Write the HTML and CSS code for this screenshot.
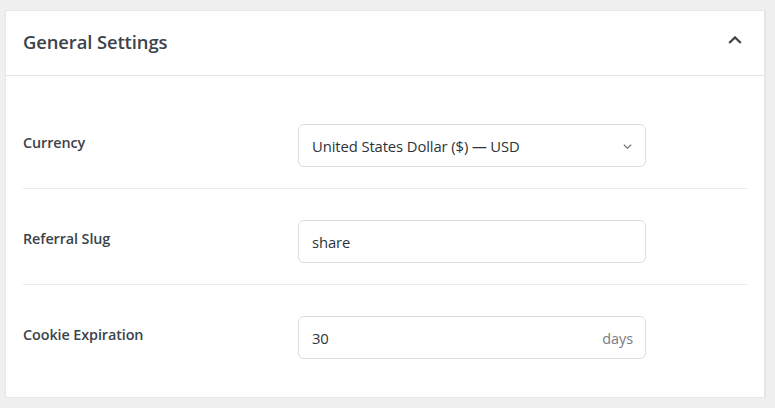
FILE: index.html
```html
<!DOCTYPE html>
<html lang="en">
<head>
<meta charset="utf-8">
<title>General Settings</title>
<link rel="stylesheet" href="styles.css">
</head>
<body>
<div class="page">
  <section class="card">
    <header class="card-header">
      <h2 class="card-title">General Settings</h2>
      <button class="toggle" type="button" aria-label="Collapse">
        <svg width="14" height="8" viewBox="0 0 14 8"><path d="M1.2 7 L7 1.4 L12.8 7" fill="none" stroke="#3c434a" stroke-width="2.2"/></svg>
      </button>
    </header>
    <div class="card-body">
      <div class="row">
        <div class="label">Currency</div>
        <div class="field">
          <div class="control select">
            <span class="value">United States Dollar ($) — USD</span>
            <svg class="caret" width="9" height="5" viewBox="0 0 9 5"><path d="M0.8 0.8 L4.5 4.2 L8.2 0.8" fill="none" stroke="#787c82" stroke-width="1.3"/></svg>
          </div>
        </div>
      </div>
      <div class="row">
        <div class="label">Referral Slug</div>
        <div class="field">
          <div class="control"><span class="value">share</span></div>
        </div>
      </div>
      <div class="row">
        <div class="label">Cookie Expiration</div>
        <div class="field">
          <div class="control">
            <span class="value">30</span>
            <span class="suffix">days</span>
          </div>
        </div>
      </div>
    </div>
  </section>
</div>
</body>
</html>
```

FILE: styles.css
```css
* { box-sizing: border-box; }
html, body { margin: 0; padding: 0; }
body {
  background: #f0f0f1;
  font-family: "Open Sans", "Noto Sans", "Liberation Sans", sans-serif;
  color: #3c434a;
}
.page {
  padding: 10px 10px 0 5px;
}
.card {
  background: #fff;
  width: 760px;
  box-shadow: 0 1px 1px rgba(0,0,0,0.06), 1px 0 1px rgba(0,0,0,0.04);
  border: 1px solid #e8e8e8;
}
.card-header {
  height: 65px;
  display: flex;
  align-items: center;
  justify-content: space-between;
  padding: 0 22px 0 17px;
  border-bottom: 1px solid #e4e4e4;
}
.card-title {
  margin: 0;
  font-size: 18.4px;
  font-weight: 600;
  color: #3c434a;
  letter-spacing: -0.1px;
  padding-bottom: 3px;
}
.toggle {
  border: 0;
  background: none;
  padding: 0;
  width: 14px;
  height: 8px;
  display: flex;
  margin-bottom: 6px;
}
.card-body {
  padding: 17px 17px 17px 17px;
}
.row {
  display: flex;
  align-items: center;
  padding: 31px 0 21px;
  border-bottom: 1px solid #ebebeb;
}
.row:last-child { border-bottom: 0; }
.label {
  width: 275px;
  flex: none;
  font-size: 14.4px;
  font-weight: 600;
  color: #3c434a;
  padding-bottom: 6px;
  letter-spacing: -0.1px;
}
.field { flex: none; }
.control {
  width: 348px;
  height: 43px;
  border: 1px solid #dcdcde;
  border-radius: 6px;
  display: flex;
  align-items: center;
  justify-content: space-between;
  padding: 1px 12px 0 13px;
  font-size: 14.8px;
  color: #2c3338;
}
.value { letter-spacing: -0.1px; }
.caret { margin-right: 1px; }
.suffix {
  color: #787c82;
  font-size: 14.4px;
}
```
